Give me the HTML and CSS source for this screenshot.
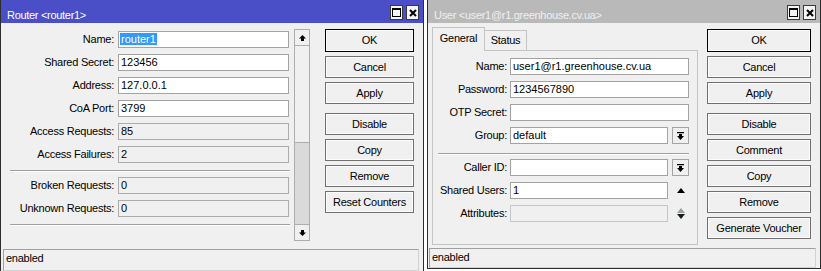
FILE: index.html
```html
<!DOCTYPE html>
<html lang="en">
  <head>
    <meta charset="UTF-8" />
    <title>Winbox</title>
    <link rel="stylesheet" href="styles.css">
  </head>
  <body>
    <div class="window router">
      <div class="titlebar">
        <span class="title">Router &lt;router1&gt;</span>
        <div class="winbtns">
          <span class="wbtn"><svg width="9" height="9" viewBox="0 0 9 9"><path d="M0 0H9V9H0Z M1 2V8H8V2Z" fill="#000" fill-rule="evenodd"/></svg></span>
          <span class="wbtn"><svg width="8" height="8" viewBox="0 0 8 8"><path d="M1 1L7 7M7 1L1 7" stroke="#000" stroke-width="2"/></svg></span>
        </div>
      </div>
      <div class="main">
        <div class="form">
          <div class="row"><label>Name:</label><div class="field"><span class="sel">router1</span></div></div>
          <div class="row"><label>Shared Secret:</label><div class="field">123456</div></div>
          <div class="row"><label>Address:</label><div class="field">127.0.0.1</div></div>
          <div class="row"><label>CoA Port:</label><div class="field">3799</div></div>
          <div class="row"><label>Access Requests:</label><div class="field ro">85</div></div>
          <div class="row"><label>Access Failures:</label><div class="field ro">2</div></div>
          <div class="sep"></div>
          <div class="row"><label>Broken Requests:</label><div class="field ro">0</div></div>
          <div class="row"><label>Unknown Requests:</label><div class="field ro">0</div></div>
          <div class="sep"></div>
        </div>
        <div class="scrollbar">
          <div class="sb-btn sb-up"><svg width="7" height="6" viewBox="0 0 7 6"><path d="M3.5 0L7 3.5H5V6H2V3.5H0Z" fill="#000"/></svg></div>
          <div class="sb-thumb"></div>
          <div class="sb-track"></div>
          <div class="sb-btn sb-down"><svg width="7" height="6" viewBox="0 0 7 6"><path d="M3.5 6L7 2.5H5V0H2V2.5H0Z" fill="#000"/></svg></div>
        </div>
        <div class="buttons">
          <div class="btn ok">OK</div>
          <div class="btn">Cancel</div>
          <div class="btn">Apply</div>
          <div class="btn gap">Disable</div>
          <div class="btn">Copy</div>
          <div class="btn">Remove</div>
          <div class="btn">Reset Counters</div>
        </div>
      </div>
      <div class="status">enabled</div>
    </div>

    <div class="window user">
      <div class="titlebar">
        <span class="title">User &lt;user1@r1.greenhouse.cv.ua&gt;</span>
        <div class="winbtns">
          <span class="wbtn"><svg width="9" height="9" viewBox="0 0 9 9"><path d="M0 0H9V9H0Z M1 2V8H8V2Z" fill="#000" fill-rule="evenodd"/></svg></span>
          <span class="wbtn"><svg width="8" height="8" viewBox="0 0 8 8"><path d="M1 1L7 7M7 1L1 7" stroke="#000" stroke-width="2"/></svg></span>
        </div>
      </div>
      <div class="main">
        <div class="tabs">
          <div class="tabbar">
            <div class="tab active">General</div>
            <div class="tab">Status</div>
          </div>
          <div class="panel">
            <div class="row"><label>Name:</label><div class="field">user1@r1.greenhouse.cv.ua</div></div>
            <div class="row"><label>Password:</label><div class="field">1234567890</div></div>
            <div class="row"><label>OTP Secret:</label><div class="field"></div></div>
            <div class="row">
              <label>Group:</label><div class="field short">default</div>
              <div class="dd"><svg width="7" height="8" viewBox="0 0 7 8"><path d="M0 0H7V1.2H0Z M2 2H5V4H7L3.5 8L0 4H2Z" fill="#000"/></svg></div>
            </div>
            <div class="sep"></div>
            <div class="row">
              <label>Caller ID:</label><div class="field short"></div>
              <div class="dd"><svg width="7" height="8" viewBox="0 0 7 8"><path d="M0 0H7V1.2H0Z M2 2H5V4H7L3.5 8L0 4H2Z" fill="#000"/></svg></div>
            </div>
            <div class="row">
              <label>Shared Users:</label><div class="field short">1</div>
              <div class="spin"><svg width="8" height="5" viewBox="0 0 8 5"><path d="M4 0L8 5H0Z" fill="#000"/></svg></div>
            </div>
            <div class="row">
              <label>Attributes:</label><div class="field short off"></div>
              <div class="spin">
                <svg width="8" height="5" viewBox="0 0 8 5"><path d="M4 0L8 5H0Z" fill="#98a398"/></svg>
                <svg width="8" height="5" viewBox="0 0 8 5"><path d="M4 5L8 0H0Z" fill="#1a1a1a"/></svg>
              </div>
            </div>
          </div>
        </div>
        <div class="buttons">
          <div class="btn ok">OK</div>
          <div class="btn">Cancel</div>
          <div class="btn">Apply</div>
          <div class="btn gap">Disable</div>
          <div class="btn">Comment</div>
          <div class="btn">Copy</div>
          <div class="btn">Remove</div>
          <div class="btn">Generate Voucher</div>
        </div>
      </div>
      <div class="status">enabled</div>
    </div>
  </body>
</html>
```

FILE: styles.css
```css
* {
  margin: 0;
  padding: 0;
  box-sizing: border-box;
}
body {
  display: flex;
  gap: 3px;
  background: #fff;
  font-family: "Liberation Sans", Arial, sans-serif;
  font-size: 11px;
  color: #000;
  letter-spacing: -0.25px;
}
.window {
  display: flex;
  flex-direction: column;
  background: #f0f0f0;
  border: 1px solid #2e2e2e;
  border-top: none;
}
.router {
  width: 424px;
  height: 271px;
  border-bottom: none;
}
.user {
  width: 394px;
  height: 269px;
}

/* title bar */
.titlebar {
  display: flex;
  justify-content: space-between;
  align-items: flex-start;
  height: 23px;
  padding: 0 4px 0 6px;
  background: #4b4fc7;
  color: #fff;
  letter-spacing: -0.3px;
}
.user .titlebar {
  background: #b9b9b9;
  color: #f0f0f0;
}
.title {
  padding-top: 8px;
  line-height: 14px;
  white-space: nowrap;
}
.winbtns {
  display: flex;
  gap: 3px;
  margin-top: 5px;
}
.wbtn {
  display: flex;
  align-items: center;
  justify-content: center;
  width: 13px;
  height: 15px;
  border: 1px solid #3a3a3a;
  background: #f4f4f4;
}

.main {
  flex: 1;
  display: flex;
}
.router .main {
  padding-top: 6px;
}
.user .main {
  padding: 4px 0 0 4px;
}

/* form rows */
.form {
  width: 288px;
}
.row {
  display: flex;
  height: 23px;
  padding-top: 2px;
}
.row label {
  width: 113px;
  margin-right: 4px;
  text-align: right;
  line-height: 17px;
  white-space: nowrap;
}
.user .row label {
  width: 74px;
  margin-right: 3px;
}
.field {
  width: 171px;
  height: 17px;
  padding-left: 2px;
  border: 1px solid #a3a3a3;
  background: #fff;
  line-height: 15px;
  letter-spacing: 0;
  white-space: nowrap;
  overflow: hidden;
}
.user .field {
  width: 179px;
}
.user .field.short {
  width: 158px;
}
.field.ro {
  background: #f0f0f0;
  border-color: #acacac;
}
.field.off {
  background: #f0f0f0;
  border-color: #c6c6c6;
}
.sel {
  margin-left: -1px;
  padding: 0 1px;
  background: #3399ff;
  color: #fff;
}
.sep {
  width: 280px;
  margin: 3px 0 3px 9px;
  border-top: 1px solid #a0a0a0;
  border-bottom: 1px solid #fff;
}
.user .sep {
  width: 251px;
  margin: 5px 0 2px 5px;
}
.dd {
  display: flex;
  align-items: center;
  justify-content: center;
  width: 17px;
  height: 17px;
  margin-left: 4px;
  border: 1px solid #a3a3a3;
  background: #f0f0f0;
}
.spin {
  display: flex;
  flex-direction: column;
  align-items: center;
  justify-content: center;
  gap: 1px;
  width: 17px;
  height: 17px;
  margin-left: 4px;
}

/* scrollbar */
.scrollbar {
  display: flex;
  flex-direction: column;
  width: 16px;
  height: 212px;
  margin-left: 5px;
  border: 1px solid #adadad;
  background: #f0f0f0;
}
.sb-btn {
  display: flex;
  align-items: center;
  justify-content: center;
  height: 16px;
}
.sb-up {
  border-bottom: 1px solid #adadad;
}
.sb-thumb {
  height: 97px;
  border-bottom: 1px solid #adadad;
}
.sb-track {
  flex: 1;
  background: #dadada;
}
.sb-down {
  border-top: 1px solid #adadad;
}

/* tabs */
.tabs {
  display: flex;
  flex-direction: column;
  width: 266px;
}
.tabbar {
  display: flex;
  align-items: flex-end;
  height: 24px;
  margin-bottom: -1px;
}
.tab {
  width: 42px;
  height: 21px;
  padding-top: 2px;
  border: 1px solid #c4c4c4;
  border-left: none;
  border-bottom: none;
  text-align: center;
  line-height: 14px;
}
.tab.active {
  position: relative;
  z-index: 1;
  width: 53px;
  height: 24px;
  padding-top: 3px;
  border-left: 1px solid #c4c4c4;
  background: #f0f0f0;
}
.panel {
  height: 195px;
  padding-top: 5px;
  border: 1px solid #c4c4c4;
}

/* buttons */
.buttons {
  display: flex;
  flex-direction: column;
  width: 89px;
  margin-left: 15px;
}
.user .buttons {
  width: 104px;
  margin: 2px 0 0 9px;
}
.btn {
  height: 22px;
  margin-bottom: 4px;
  border: 1px solid #707070;
  background: #f0f0f0;
  box-shadow: inset 0 0 0 1px #fcfcfc;
  text-align: center;
  line-height: 20px;
  white-space: nowrap;
}
.btn.ok {
  height: 23px;
  border-color: #000;
  line-height: 21px;
}
.btn.gap {
  margin-top: 5px;
}

/* status bar */
.status {
  height: 22px;
  margin: 0 4px 0 2px;
  padding-left: 2px;
  border: 1px solid #d2d2d2;
  border-top-color: #a0a0a0;
  border-left-color: #a0a0a0;
  line-height: 16px;
}
.user .status {
  height: 20px;
  margin: 0 4px 0 1px;
}
```
